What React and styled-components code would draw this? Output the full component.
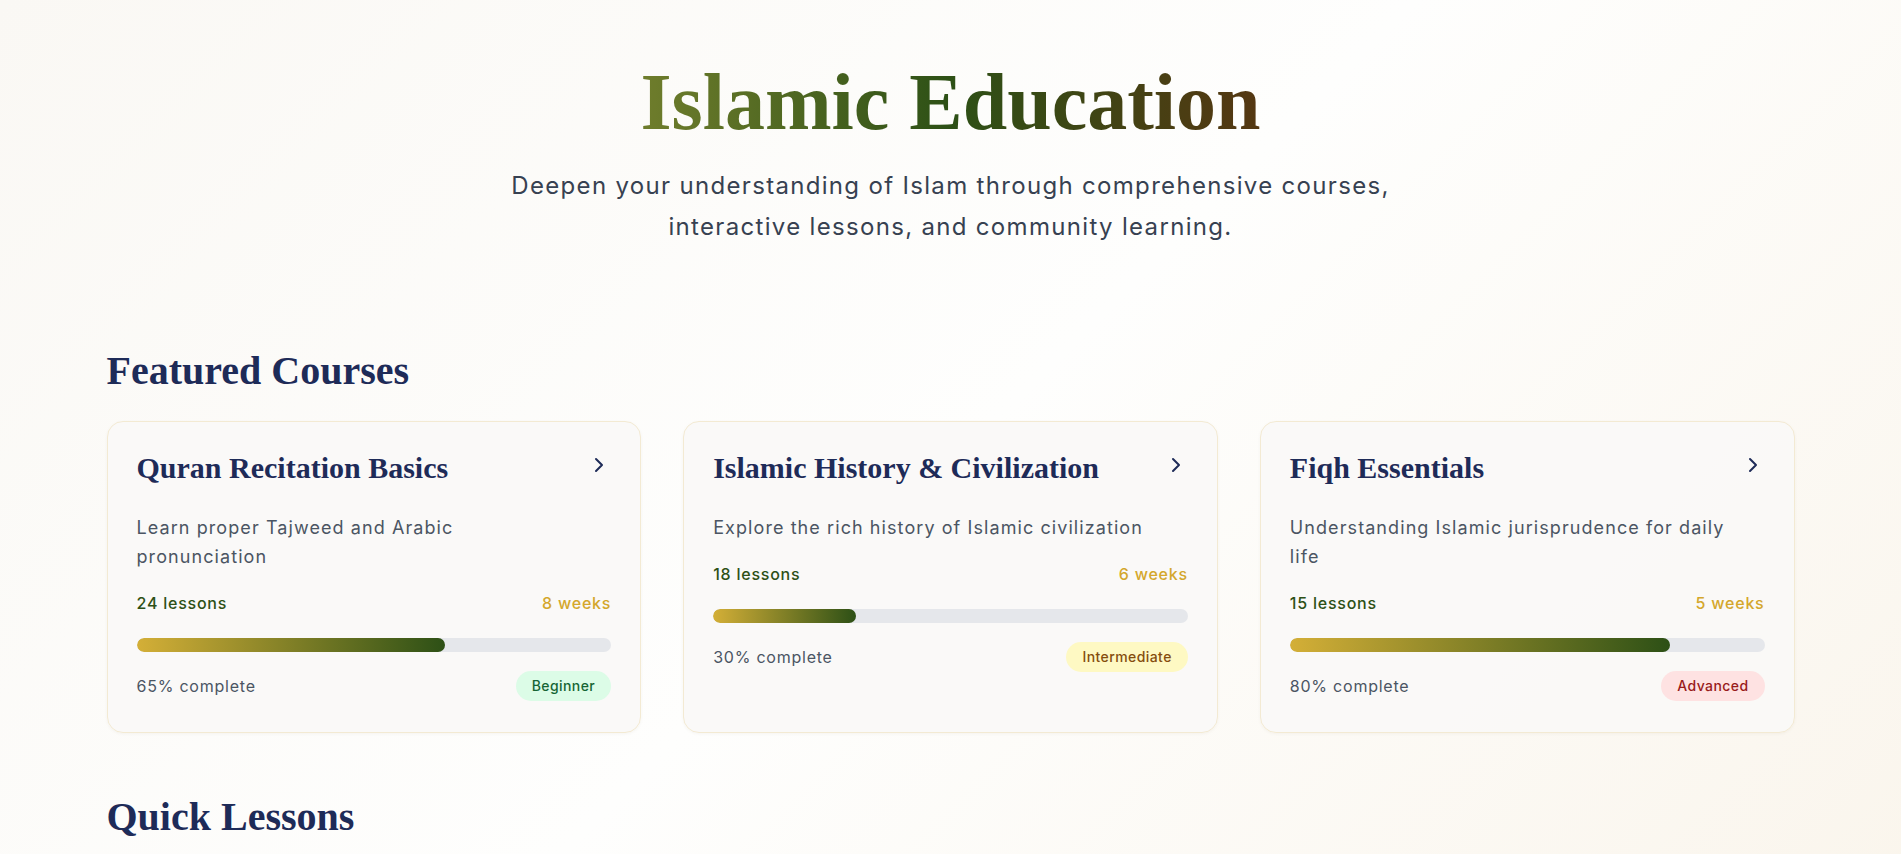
import React from 'react';
import styled, { createGlobalStyle } from 'styled-components';
import { ChevronRight } from 'lucide-react';

const courses = [
  {
    title: 'Quran Recitation Basics',
    desc: 'Learn proper Tajweed and Arabic pronunciation',
    lessons: 24,
    weeks: 8,
    progress: 65,
    level: 'Beginner',
  },
  {
    title: 'Islamic History & Civilization',
    desc: 'Explore the rich history of Islamic civilization',
    lessons: 18,
    weeks: 6,
    progress: 30,
    level: 'Intermediate',
  },
  {
    title: 'Fiqh Essentials',
    desc: 'Understanding Islamic jurisprudence for daily life',
    lessons: 15,
    weeks: 5,
    progress: 80,
    level: 'Advanced',
  },
];

const levelColors = {
  Beginner: { bg: '#dcfce7', fg: '#166534' },
  Intermediate: { bg: '#fef9c3', fg: '#854d0e' },
  Advanced: { bg: '#fee2e2', fg: '#991b1b' },
};

function App() {
  return (
    <>
      <GlobalStyle />
      <StPage>
        <StHero>
          <StTitle>Islamic Education</StTitle>
          <StSubtitle>
            Deepen your understanding of Islam through comprehensive courses,
            <br />
            interactive lessons, and community learning.
          </StSubtitle>
        </StHero>

        <StSection>
          <StSectionTitle>Featured Courses</StSectionTitle>
          <StCourseGrid>
            {courses.map((c) => (
              <CourseCard key={c.title} course={c} />
            ))}
          </StCourseGrid>
        </StSection>

        <StSection $spaced>
          <StSectionTitle>Quick Lessons</StSectionTitle>
        </StSection>
      </StPage>
    </>
  );
}

const CourseCard = ({ course }) => {
  return (
    <StCard>
      <StCardHead>
        <StCardText>
          <StCardTitle>{course.title}</StCardTitle>
          <StCardDesc>{course.desc}</StCardDesc>
        </StCardText>
        <StChevron>
          <ChevronRight size={24} color="#1e2b58" strokeWidth={2} />
        </StChevron>
      </StCardHead>
      <StMetaRow>
        <StLessons>{course.lessons} lessons</StLessons>
        <StWeeks>{course.weeks} weeks</StWeeks>
      </StMetaRow>
      <StTrack>
        <StFill style={{ width: `${course.progress}%` }} />
      </StTrack>
      <StFootRow>
        <StComplete>{course.progress}% complete</StComplete>
        <StBadge $level={course.level}>{course.level}</StBadge>
      </StFootRow>
    </StCard>
  );
};

const GlobalStyle = createGlobalStyle`
  * {
    box-sizing: border-box;
  }
  body {
    margin: 0;
    font-family: Inter, "Open Sans", sans-serif;
    letter-spacing: 0.048em;
    background: #fbfaf7;
  }
`;

const StPage = styled.div`
  min-height: 100vh;
  padding: 54px 0 60px;
  background: linear-gradient(135deg, #faf8f4 0%, #fefefd 50%, #faf5ec 100%);
`;

const StHero = styled.header`
  display: flex;
  flex-direction: column;
  align-items: center;
  text-align: center;
`;

const StTitle = styled.h1`
  margin: 0;
  font-family: "Liberation Serif", serif;
  font-weight: 700;
  font-size: 80px;
  line-height: 96px;
  letter-spacing: 0;
  background: linear-gradient(90deg, #6f7d2c 0%, #2d5016 50%, #553712 100%);
  -webkit-background-clip: text;
  background-clip: text;
  color: transparent;
`;

const StSubtitle = styled.p`
  margin: 15px 0 0;
  font-size: 24px;
  line-height: 41px;
  letter-spacing: 0.055em;
  color: #374151;
`;

const StSection = styled.section`
  max-width: 1688px;
  margin: ${(p) => (p.$spaced ? '60px' : '100px')} auto 0;
`;

const StSectionTitle = styled.h2`
  margin: 0 0 26px;
  font-family: "Liberation Serif", serif;
  font-weight: 700;
  font-size: 40px;
  line-height: 48px;
  letter-spacing: 0;
  color: #1e2b58;
`;

const StCourseGrid = styled.div`
  display: grid;
  grid-template-columns: repeat(3, 1fr);
  gap: 42px;
`;

const StCard = styled.div`
  display: flex;
  flex-direction: column;
  padding: 30px 29px 31px;
  background: rgba(250, 249, 247, 0.92);
  border: 1px solid #f3ead3;
  border-radius: 16px;
  box-shadow: 0 1px 3px rgba(120, 100, 60, 0.06);
`;

const StCardHead = styled.div`
  display: flex;
  align-items: flex-start;
  gap: 12px;
`;

const StCardText = styled.div`
  flex: 1;
  min-width: 0;
`;

const StChevron = styled.div`
  display: flex;
  margin-top: 1px;
`;

const StCardTitle = styled.h3`
  margin: 0;
  font-family: "Liberation Serif", serif;
  font-weight: 700;
  font-size: 30px;
  line-height: 32px;
  letter-spacing: 0;
  color: #1e2b58;
`;

const StCardDesc = styled.p`
  margin: 29px 0 0;
  font-size: 18px;
  line-height: 29px;
  letter-spacing: 0.06em;
  color: #4b5563;
`;

const StMetaRow = styled.div`
  display: flex;
  justify-content: space-between;
  margin-top: 20px;
  font-size: 16px;
  line-height: 24px;
  font-weight: 500;
`;

const StLessons = styled.span`
  color: #2d5016;
`;

const StWeeks = styled.span`
  color: #d4a72c;
`;

const StTrack = styled.div`
  margin-top: 23px;
  height: 14px;
  border-radius: 7px;
  background: #e5e7eb;
  overflow: hidden;
`;

const StFill = styled.div`
  height: 100%;
  border-radius: 7px;
  background: linear-gradient(90deg, #d4af37 0%, #2d5016 100%);
`;

const StFootRow = styled.div`
  display: flex;
  align-items: center;
  justify-content: space-between;
  margin-top: 19px;
`;

const StComplete = styled.span`
  font-size: 16px;
  line-height: 24px;
  color: #4b5563;
`;

const StBadge = styled.span`
  padding: 4px 16px;
  border-radius: 999px;
  font-size: 14px;
  line-height: 22px;
  font-weight: 500;
  letter-spacing: 0.03em;
  background: ${(p) => levelColors[p.$level].bg};
  color: ${(p) => levelColors[p.$level].fg};
`;

export default App;
